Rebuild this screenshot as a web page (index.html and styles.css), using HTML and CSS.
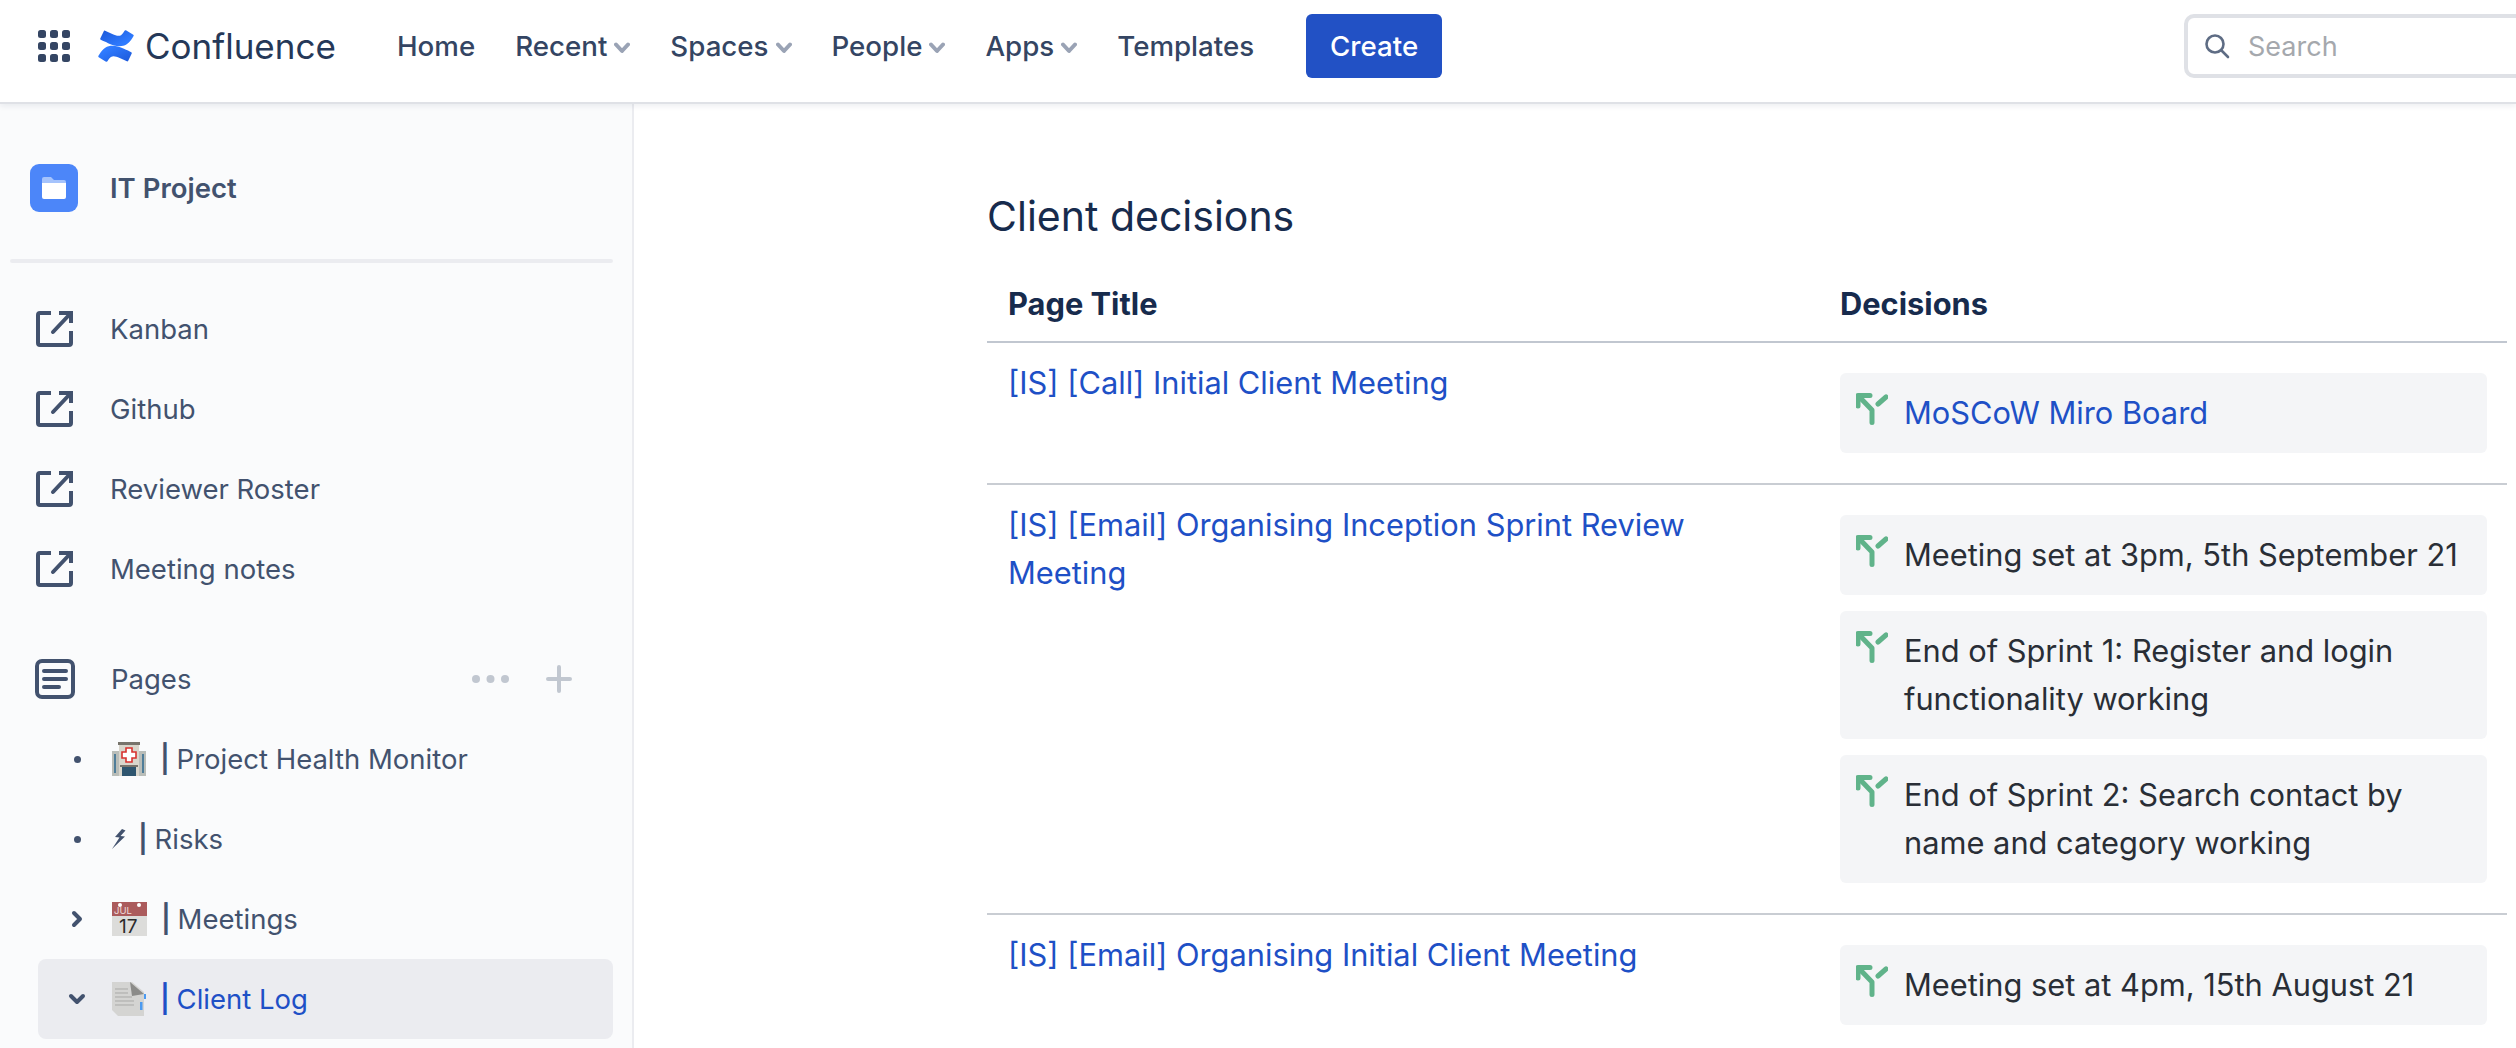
FILE: index.html
```html
<!DOCTYPE html>
<html lang="en" dir="ltr">
    <head>
        <meta charset="utf-8">
        <meta name="viewport" content="width=device-width, initial-scale=1.0">
        <link rel="stylesheet" href="styles.css">
        <title>Client decisions</title>
    </head>
    <body>
        <svg class="defs" width="0" height="0" aria-hidden="true">
            <defs>
                <linearGradient id="logoA" x1="1" y1="1" x2="0.2" y2="0.3">
                    <stop offset="0" stop-color="#1c58d8"/>
                    <stop offset="1" stop-color="#2f7bff"/>
                </linearGradient>
                <linearGradient id="logoB" x1="0" y1="0" x2="0.8" y2="0.7">
                    <stop offset="0" stop-color="#1c58d8"/>
                    <stop offset="1" stop-color="#2f7bff"/>
                </linearGradient>
                <symbol id="chev" viewBox="0 0 16 12">
                    <path d="M2 2.5 L8 9 L14 2.5" fill="none" stroke="currentColor" stroke-width="4" stroke-linecap="round" stroke-linejoin="round"/>
                </symbol>
                <symbol id="ext" viewBox="0 0 37 36">
                    <path d="M15 2 H4 Q2 2 2 4 V32 Q2 34 4 34 H33 Q35 34 35 32 V20" fill="none" stroke="currentColor" stroke-width="4"/>
                    <path d="M23 2 H35 V12" fill="none" stroke="currentColor" stroke-width="4"/>
                    <path d="M17 21 L34 3" fill="none" stroke="currentColor" stroke-width="4" stroke-linecap="round"/>
                </symbol>
                <symbol id="decision" viewBox="0 0 32 32">
                    <path d="M2 13 V2.5 H14" fill="none" stroke="currentColor" stroke-width="5" stroke-linecap="round" stroke-linejoin="round"/>
                    <path d="M3 3.5 L16 17 V29.5" fill="none" stroke="currentColor" stroke-width="5" stroke-linecap="round" stroke-linejoin="round"/>
                    <path d="M22 11 L30 4" fill="none" stroke="currentColor" stroke-width="5" stroke-linecap="round"/>
                </symbol>
            </defs>
        </svg>

        <header class="topbar">
            <svg class="apps" width="32" height="32" viewBox="0 0 32 32">
                <rect x="0" y="0" width="8" height="8" rx="2.5"/><rect x="12" y="0" width="8" height="8" rx="2.5"/><rect x="24" y="0" width="8" height="8" rx="2.5"/>
                <rect x="0" y="12" width="8" height="8" rx="2.5"/><rect x="12" y="12" width="8" height="8" rx="2.5"/><rect x="24" y="12" width="8" height="8" rx="2.5"/>
                <rect x="0" y="24" width="8" height="8" rx="2.5"/><rect x="12" y="24" width="8" height="8" rx="2.5"/><rect x="24" y="24" width="8" height="8" rx="2.5"/>
            </svg>
            <svg class="logo" width="36" height="32" viewBox="1 2 30 28" preserveAspectRatio="none">
                <path fill="url(#logoA)" d="M2.2 23.3c-.3.5-.6 1-.9 1.5-.2.4-.1.9.3 1.1l6.1 3.8c.4.3.9.1 1.2-.3.2-.4.5-.9.9-1.5 2.4-4 4.9-3.5 9.3-1.4l6 2.9c.4.2 1 0 1.1-.4l2.9-6.5c.2-.4 0-.9-.4-1.1-1.3-.6-3.8-1.8-6.1-2.9C14 14.3 6.9 14.6 2.2 23.3z"/>
                <path fill="url(#logoB)" d="M29.8 8.7c.3-.5.6-1 .9-1.5.2-.4.1-.9-.3-1.1L24.3 2.3c-.4-.3-.9-.1-1.2.3-.2.4-.5.9-.9 1.5-2.4 4-4.9 3.5-9.3 1.4l-6-2.9c-.4-.2-1 0-1.1.4L2.9 9.5c-.2.4 0 .9.4 1.1 1.3.6 3.8 1.8 6.1 2.9 8.6 4.2 15.7 3.9 20.4-4.8z"/>
            </svg>
            <span class="brand">Confluence</span>
            <nav class="mainnav">
                <a class="navitem">Home</a>
                <a class="navitem">Recent <svg class="chev" width="16" height="12"><use href="#chev"/></svg></a>
                <a class="navitem">Spaces <svg class="chev" width="16" height="12"><use href="#chev"/></svg></a>
                <a class="navitem">People <svg class="chev" width="16" height="12"><use href="#chev"/></svg></a>
                <a class="navitem">Apps <svg class="chev" width="16" height="12"><use href="#chev"/></svg></a>
                <a class="navitem">Templates</a>
            </nav>
            <button class="create" type="button">Create</button>
            <div class="searchbox">
                <svg width="26" height="26" viewBox="0 0 26 26">
                    <circle cx="11" cy="11" r="8.5" fill="none" stroke="#5e6c84" stroke-width="2.6"/>
                    <path d="M17.5 17.5 L24 24" stroke="#5e6c84" stroke-width="2.6" stroke-linecap="round"/>
                </svg>
                <span class="searchtext">Search</span>
            </div>
        </header>

        <div class="layout">
            <aside class="sidebar">
                <div class="spacehead">
                    <svg width="48" height="48" viewBox="0 0 48 48">
                        <rect width="48" height="48" rx="9" fill="#4c86f9"/>
                        <path d="M12 21 V15 Q12 13 14 13 H21 L24 16 H34 Q36 16 36 18 V21 Z" fill="#a5c3fc"/>
                        <path d="M12 19 H36 V33 Q36 35 34 35 H14 Q12 35 12 33 Z" fill="#fff"/>
                    </svg>
                    <span>IT Project</span>
                </div>
                <div class="divider"></div>

                <ul class="shortcuts">
                    <li><svg width="37" height="36"><use href="#ext"/></svg>Kanban</li>
                    <li><svg width="37" height="36"><use href="#ext"/></svg>Github</li>
                    <li><svg width="37" height="36"><use href="#ext"/></svg>Reviewer Roster</li>
                    <li><svg width="37" height="36"><use href="#ext"/></svg>Meeting notes</li>
                </ul>

                <div class="pageshead">
                    <svg width="40" height="40" viewBox="0 0 40 40">
                        <rect x="2" y="2" width="36" height="36" rx="5" fill="none" stroke="currentColor" stroke-width="4"/>
                        <path d="M9 12 H31 M9 20 H31 M9 28 H24" stroke="currentColor" stroke-width="4" stroke-linecap="round"/>
                    </svg>
                    <span class="pageslabel">Pages</span>
                    <svg class="dots" width="37" height="10" viewBox="0 0 37 10">
                        <circle cx="4" cy="5" r="4"/><circle cx="18.5" cy="5" r="4"/><circle cx="33" cy="5" r="4"/>
                    </svg>
                    <svg class="plus" width="26" height="28" viewBox="0 0 26 28">
                        <path d="M13 2 V26 M2 14 H24" stroke="currentColor" stroke-width="4" stroke-linecap="round"/>
                    </svg>
                </div>

                <ul class="tree">
                    <li class="treerow">
                        <span class="twisty"><i class="bullet"></i></span>
                        <svg class="emoji" width="34" height="34" viewBox="0 0 34 34">
                            <rect x="0" y="9" width="34" height="25" fill="#b9bdb8"/>
                            <rect x="7" y="1" width="20" height="33" fill="#d9d6cc"/>
                            <rect x="6" y="0" width="22" height="3" fill="#77746c"/>
                            <rect x="2" y="12" width="2" height="19" fill="#4f7d99"/>
                            <rect x="30" y="12" width="2" height="19" fill="#4f7d99"/>
                            <path d="M14 6 H20 V10 H24 V16 H20 V20 H14 V16 H10 V10 H14 Z" fill="#fff" stroke="#d8322f" stroke-width="1.6"/>
                            <rect x="10" y="25" width="14" height="9" fill="#2e556e"/>
                            <rect x="8" y="23" width="18" height="2" fill="#77746c"/>
                        </svg>
                        <span class="treelabel"><b class="sep">|</b> Project Health Monitor</span>
                    </li>
                    <li class="treerow">
                        <span class="twisty"><i class="bullet"></i></span>
                        <svg class="emoji bolt" width="14" height="20" viewBox="0 0 14 20">
                            <path d="M10 0 L3 8 L7.5 8.5 L0 20 L13 7.5 L8.5 7 L13.5 1.5 Z" fill="#42526e"/>
                        </svg>
                        <span class="treelabel"><b class="sep">|</b> Risks</span>
                    </li>
                    <li class="treerow">
                        <span class="twisty">
                            <svg width="12" height="18" viewBox="0 0 12 18"><path d="M3 3 L9 9 L3 15" fill="none" stroke="currentColor" stroke-width="4" stroke-linecap="round" stroke-linejoin="round"/></svg>
                        </span>
                        <svg class="emoji" width="35" height="34" viewBox="0 0 35 34">
                            <rect width="35" height="34" fill="#dcdcda"/>
                            <rect width="35" height="14" fill="#ab5b5c"/>
                            <circle cx="8" cy="3" r="2" fill="#fff"/>
                            <circle cx="27" cy="3" r="2" fill="#fff"/>
                            <text x="2" y="12" class="calmonth">JUL</text>
                            <text x="7" y="31" class="calday">17</text>
                        </svg>
                        <span class="treelabel"><b class="sep">|</b> Meetings</span>
                    </li>
                    <li class="treerow selected">
                        <span class="twisty">
                            <svg width="18" height="12" viewBox="0 0 18 12"><path d="M3 3 L9 9 L15 3" fill="none" stroke="currentColor" stroke-width="4" stroke-linecap="round" stroke-linejoin="round"/></svg>
                        </span>
                        <svg class="emoji" width="34" height="34" viewBox="0 0 34 34">
                            <path d="M0 0 H20 L32 10 V34 H6 L0 28 Z" fill="#d4d4d2"/>
                            <path d="M18 0 L32 12 L20 14 Z" fill="#8b8b89"/>
                            <path d="M3 7 H16 M3 11 H16 M3 15 H20 M3 19 H22 M3 23 H22" stroke="#a9a9a7" stroke-width="1"/>
                            <rect x="32" y="12" width="2.5" height="5" fill="#4c9af0"/>
                            <rect x="28" y="20" width="2.5" height="8" fill="#4c9af0"/>
                        </svg>
                        <span class="treelabel"><b class="sep">|</b> Client Log</span>
                    </li>
                </ul>
            </aside>

            <main class="content">
                <h1 class="pagetitle">Client decisions</h1>
                <table class="report">
                    <tr>
                        <th class="col-title">Page Title</th>
                        <th class="col-decisions">Decisions</th>
                    </tr>
                    <tr>
                        <td><a class="pagelink">[IS] [Call] Initial Client Meeting</a></td>
                        <td>
                            <div class="decision"><svg width="32" height="32"><use href="#decision"/></svg><a class="pagelink">MoSCoW Miro Board</a></div>
                        </td>
                    </tr>
                    <tr>
                        <td><a class="pagelink">[IS] [Email] Organising Inception Sprint Review Meeting</a></td>
                        <td>
                            <div class="decision"><svg width="32" height="32"><use href="#decision"/></svg><span>Meeting set at 3pm, 5th September 21</span></div>
                            <div class="decision"><svg width="32" height="32"><use href="#decision"/></svg><span>End of Sprint 1: Register and login functionality working</span></div>
                            <div class="decision"><svg width="32" height="32"><use href="#decision"/></svg><span>End of Sprint 2: Search contact by name and category working</span></div>
                        </td>
                    </tr>
                    <tr>
                        <td><a class="pagelink">[IS] [Email] Organising Initial Client Meeting</a></td>
                        <td>
                            <div class="decision"><svg width="32" height="32"><use href="#decision"/></svg><span>Meeting set at 4pm, 15th August 21</span></div>
                        </td>
                    </tr>
                </table>
            </main>
        </div>
    </body>
</html>
```

FILE: styles.css
```css
html, body {
  margin: 0;
  height: 100%;
  overflow: hidden;
}
body {
  background-color: white;
  color: #172b4d;
  font-family: Inter, "Open Sans", Arial, sans-serif;
  font-size: 30.8px;
  line-height: 48px;
  display: flex;
  flex-direction: column;
}
.defs {
  position: absolute;
}
ul {
  list-style: none;
  margin: 0;
  padding: 0;
}

/* top bar */
.topbar {
  flex: none;
  height: 104px;
  box-sizing: border-box;
  display: flex;
  align-items: center;
  padding-left: 38px;
  padding-bottom: 10px;
  background-color: white;
  border-bottom: 2px solid #dfe1e6;
  box-shadow: 0 2px 6px rgba(9, 30, 66, 0.08);
  overflow: hidden;
  position: relative;
  z-index: 2;
}
.apps {
  fill: #344563;
  margin-right: 28px;
}
.logo {
  margin-right: 11px;
}
.brand {
  font-size: 35px;
  color: #253858;
  width: 252px;
}
.mainnav {
  display: flex;
  align-items: center;
  gap: 40px;
}
.navitem {
  font-size: 27.7px;
  font-weight: 500;
  color: #344563;
  display: flex;
  align-items: center;
  gap: 7px;
  white-space: nowrap;
}
.chev {
  color: #9aa3b5;
  margin-top: 4px;
}
.create {
  margin-left: 52px;
  width: 136px;
  height: 64px;
  border: 0;
  border-radius: 6px;
  background-color: #2251c5;
  color: white;
  font-family: inherit;
  font-size: 27.7px;
  font-weight: 500;
}
.searchbox {
  margin-left: auto;
  margin-right: -40px;
  flex: none;
  width: 372px;
  height: 64px;
  box-sizing: border-box;
  border: 4px solid #dfe1e6;
  border-radius: 10px;
  display: flex;
  align-items: center;
  gap: 18px;
  padding-left: 16px;
  color: #a5a8ad;
  font-size: 27px;
}
.searchtext {
  padding-top: 2px;
}

/* sidebar */
.layout {
  flex: 1;
  display: flex;
  min-height: 0;
}
.sidebar {
  flex: none;
  width: 634px;
  box-sizing: border-box;
  background-color: #fafbfc;
  border-right: 2px solid #ebecf0;
  color: #42526e;
  font-size: 27.5px;
  overflow: hidden;
  padding-top: 60px;
}
.spacehead {
  display: flex;
  align-items: center;
  gap: 32px;
  padding-left: 30px;
  font-weight: 600;
}
.divider {
  height: 4px;
  margin: 47px 19px 0 10px;
  background-color: #ebecf0;
  border-radius: 2px;
}
.shortcuts {
  margin-top: 26px;
}
.shortcuts li {
  height: 80px;
  display: flex;
  align-items: center;
  gap: 37px;
  padding-left: 36px;
}
.pageshead {
  height: 80px;
  margin-top: 30px;
  display: flex;
  align-items: center;
  padding-left: 35px;
}
.pageslabel {
  margin-left: 36px;
  flex: 1;
}
.dots {
  fill: #c1c7d0;
  margin-right: 37px;
}
.plus {
  color: #c1c7d0;
  margin-right: 60px;
}
.tree {
  margin-left: 38px;
  margin-right: 19px;
}
.treerow {
  height: 80px;
  display: flex;
  align-items: center;
  border-radius: 8px;
  padding-left: 26px;
}
.treerow.selected {
  background-color: #ebecf0;
  color: #1e50c6;
}
.treerow.selected .twisty {
  color: #42526e;
}
.twisty {
  width: 26px;
  margin-right: 22px;
  display: flex;
  justify-content: center;
  align-items: center;
}
.bullet {
  width: 7px;
  height: 7px;
  border-radius: 50%;
  background-color: #42526e;
}
.emoji {
  flex: none;
  margin-right: 14px;
}
.emoji.bolt {
  margin-right: 12px;
}
.treelabel {
  white-space: nowrap;
}
.sep {
  font-weight: 600;
  margin-right: -1px;
}
.calmonth {
  font-size: 9.5px;
  fill: #f0dede;
}
.calday {
  font-size: 19px;
  fill: #2b2b2b;
}

/* page content */
.content {
  flex: 1;
  min-width: 0;
  overflow: hidden;
  padding-left: 353px;
  padding-right: 9px;
}
.pagetitle {
  font-size: 41px;
  font-weight: 400;
  line-height: 56px;
  margin: 84px 0 0 0;
}
.report {
  width: 100%;
  table-layout: fixed;
  border-collapse: collapse;
  margin-top: 22px;
}
.report th {
  text-align: left;
  font-weight: 700;
  padding: 14px 20px 13px 21px;
  border-bottom: 2px solid #c1c7d0;
}
.col-title {
  width: 832px;
  box-sizing: border-box;
}
.report td {
  vertical-align: top;
  padding: 16px 20px 14px 21px;
  border-bottom: 2px solid #c9cdd3;
}
.pagelink {
  color: #1e50c6;
}
.decision {
  display: flex;
  gap: 16px;
  padding: 16px;
  border-radius: 6px;
  background-color: #f4f5f7;
  margin: 16px 0 0 0;
  color: #292e36;
}
.decision:first-child {
  margin-top: 14px;
}
.decision:last-child {
  margin-bottom: 16px;
}
.decision svg {
  flex: none;
  color: #60b38a;
  margin-top: 4px;
}
```
